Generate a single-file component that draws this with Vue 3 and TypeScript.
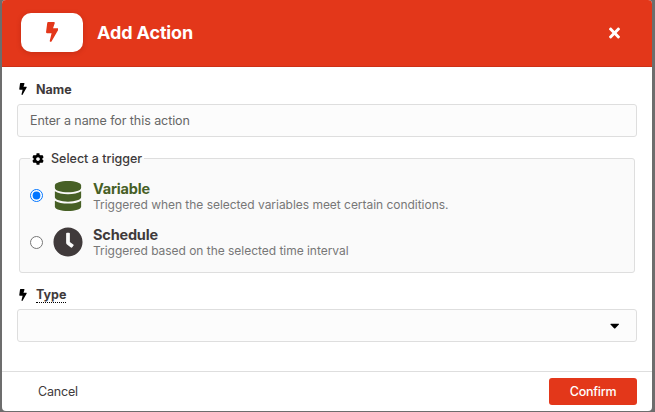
<script setup lang="ts">
import { ref } from 'vue'

interface Trigger {
  id: string
  title: string
  description: string
  viewBox: string
  path: string
}

const bolt =
  'M296 160H180.6l42.6-129.8C227.2 15 215.7 0 200 0H56C44 0 33.8 8.9 32.2 20.8l-32 240C-1.7 275.2 9.5 288 24 288h118.7L96.6 482.5c-3.6 15.2 8 29.5 23.3 29.5 8.4 0 16.4-4.4 20.8-12l176-304c9.3-15.9-2.2-36-20.7-36z'

const triggers: Trigger[] = [
  {
    id: 'variable',
    title: 'Variable',
    description: 'Triggered when the selected variables meet certain conditions.',
    viewBox: '0 0 448 512',
    path: 'M448 73.143v45.714C448 159.143 347.667 192 224 192S0 159.143 0 118.857V73.143C0 32.857 100.333 0 224 0s224 32.857 224 73.143zM448 176v102.857C448 319.143 347.667 352 224 352S0 319.143 0 278.857V176c48.125 33.143 136.208 48.572 224 48.572S399.874 209.143 448 176zm0 160v102.857C448 479.143 347.667 512 224 512S0 479.143 0 438.857V336c48.125 33.143 136.208 48.572 224 48.572S399.874 369.143 448 336z',
  },
  {
    id: 'schedule',
    title: 'Schedule',
    description: 'Triggered based on the selected time interval',
    viewBox: '0 0 512 512',
    path: 'M256,8C119,8,8,119,8,256S119,504,256,504,504,393,504,256,393,8,256,8Zm92.49,313h0l-20,25a16,16,0,0,1-22.49,2.5h0l-67-49.72a40,40,0,0,1-15-31.23V112a16,16,0,0,1,16-16h32a16,16,0,0,1,16,16V256l58,42.5A16,16,0,0,1,348.49,321Z',
  },
]

const name = ref('')
const selected = ref('variable')
</script>

<template>
  <div class="backdrop">
    <div class="modal">
      <header class="header">
        <div class="badge">
          <svg viewBox="0 0 320 512"><path :d="bolt" /></svg>
        </div>
        <h1 class="title">Add Action</h1>
        <button class="close" type="button" aria-label="Close">
          <svg viewBox="0 0 352 512"><path d="M242.72 256l100.07-100.07c12.28-12.28 12.28-32.19 0-44.48l-22.24-22.24c-12.28-12.28-32.19-12.28-44.48 0L176 189.28 75.93 89.21c-12.28-12.28-32.19-12.28-44.48 0L9.21 111.45c-12.28 12.28-12.28 32.19 0 44.48L109.28 256 9.21 356.07c-12.28 12.28-12.28 32.19 0 44.48l22.24 22.24c12.28 12.28 32.2 12.28 44.48 0L176 322.72l100.07 100.07c12.28 12.28 32.2 12.28 44.48 0l22.24-22.24c12.28-12.28 12.28-32.19 0-44.48L242.72 256z" /></svg>
        </button>
      </header>

      <main class="body">
        <label class="label" for="name">
          <svg class="label-icon" viewBox="0 0 320 512"><path :d="bolt" /></svg>
          <span>Name</span>
        </label>
        <input id="name" v-model="name" class="control" type="text" placeholder="Enter a name for this action" />

        <fieldset class="triggers">
          <legend class="legend">
            <svg viewBox="0 0 512 512"><path d="M487.4 315.7l-42.6-24.6c4.3-23.2 4.3-47 0-70.2l42.6-24.6c4.9-2.8 7.1-8.6 5.5-14-11.1-35.6-30-67.8-54.7-94.6-3.8-4.1-10-5.1-14.8-2.3L380.8 110c-17.9-15.4-38.5-27.3-60.8-35.1V25.8c0-5.6-3.9-10.5-9.4-11.7-36.7-8.2-74.3-7.8-109.2 0-5.5 1.2-9.4 6.1-9.4 11.7V75c-22.2 7.9-42.8 19.8-60.8 35.1L88.7 85.5c-4.9-2.8-11-1.9-14.8 2.3-24.7 26.7-43.6 58.9-54.7 94.6-1.7 5.4.6 11.2 5.5 14L67.3 221c-4.3 23.2-4.3 47 0 70.2l-42.6 24.6c-4.9 2.8-7.1 8.6-5.5 14 11.1 35.6 30 67.8 54.7 94.6 3.8 4.1 10 5.1 14.8 2.3l42.6-24.6c17.9 15.4 38.5 27.3 60.8 35.1v49.2c0 5.6 3.9 10.5 9.4 11.7 36.7 8.2 74.3 7.8 109.2 0 5.5-1.2 9.4-6.1 9.4-11.7v-49.2c22.2-7.9 42.8-19.8 60.8-35.1l42.6 24.6c4.9 2.8 11 1.9 14.8-2.3 24.7-26.7 43.6-58.9 54.7-94.6 1.5-5.5-.7-11.3-5.6-14.1zM256 336c-44.1 0-80-35.9-80-80s35.9-80 80-80 80 35.9 80 80-35.9 80-80 80z" /></svg>
            <span>Select a trigger</span>
          </legend>
          <label v-for="t in triggers" :key="t.id" class="option" :class="{ active: selected === t.id }">
            <input v-model="selected" class="radio" type="radio" name="trigger" :value="t.id" />
            <svg class="option-icon" :viewBox="t.viewBox"><path :d="t.path" /></svg>
            <span class="option-text">
              <strong>{{ t.title }}</strong>
              <small>{{ t.description }}</small>
            </span>
          </label>
        </fieldset>

        <div class="label type-label">
          <svg class="label-icon" viewBox="0 0 320 512"><path :d="bolt" /></svg>
          <span class="hint">Type</span>
        </div>
        <div class="control select" role="combobox" aria-label="Type" tabindex="0">
          <svg viewBox="0 0 320 512"><path d="M31.3 192h257.3c17.8 0 26.7 21.5 14.1 34.1L174.1 354.8c-7.8 7.8-20.5 7.8-28.3 0L17.2 226.1C4.6 213.5 13.5 192 31.3 192z" /></svg>
        </div>
      </main>

      <footer class="footer">
        <button class="cancel" type="button">Cancel</button>
        <button class="confirm" type="button">Confirm</button>
      </footer>
    </div>
  </div>
</template>

<style>
body {
  background: #6d6d6d;
  overflow: hidden;
}
</style>

<style scoped>
.backdrop,
.backdrop * {
  box-sizing: border-box;
}
.backdrop {
  height: 412px;
  padding: 0 3px 1px 2px;
  background: #6d6d6d;
  font-family: Inter, 'Liberation Sans', sans-serif;
  font-size: 12.5px;
  color: #403a3b;
}
svg {
  display: block;
  flex: none;
}
button {
  font: inherit;
  border: 0;
  padding: 0;
  background: none;
}
.modal {
  height: 411px;
  display: flex;
  flex-direction: column;
  background: #fff;
  border-radius: 4px;
  overflow: hidden;
}
.header {
  height: 67px;
  flex: none;
  display: flex;
  align-items: center;
  padding: 0 32px 1px 19px;
  background: #e3371a;
  border-bottom: 1px solid #cc3017;
}
.badge {
  width: 62px;
  height: 39px;
  display: flex;
  align-items: center;
  justify-content: center;
  background: #fff;
  border-radius: 10px;
  box-shadow: 0 1px 5px rgba(120, 20, 0, 0.28);
}
.badge svg {
  height: 20px;
  fill: #e3371a;
  margin-top: -1px;
}
.title {
  margin: 0 auto 0 14px;
  font-size: 18px;
  line-height: 22px;
  font-weight: 700;
  letter-spacing: -0.12px;
  color: #fff;
}
.close svg {
  height: 16px;
  fill: #fff;
}
.body {
  flex: 1;
  display: flex;
  flex-direction: column;
  padding: 15px 15px 0;
}
.label {
  height: 15px;
  display: flex;
  align-items: center;
  gap: 9px;
  padding-left: 2px;
  font-weight: 700;
}
.label-icon {
  width: 8px;
  height: 12px;
  margin-bottom: 1px;
}
.control {
  width: 620px;
  height: 33px;
  margin: 7px 0 0;
  padding: 0 12px;
  border: 1px solid #dedede;
  border-radius: 3px;
  background: #fcfcfc;
  font: inherit;
  letter-spacing: -0.07px;
  outline: none;
}
.control::placeholder {
  color: #666;
  opacity: 1;
}
.triggers {
  margin: 14px 2px 0;
  height: 122px;
  padding: 7px 10px 0;
  border: 1px solid #dedede;
  border-radius: 3px;
  background: #fafafa;
}
.legend {
  height: 15px;
  display: flex;
  align-items: center;
  gap: 7px;
  padding: 0 2px;
  font-weight: 500;
}
.legend svg {
  width: 12px;
}
.option {
  height: 46px;
  display: flex;
  align-items: center;
}
.radio {
  width: 13px;
  height: 13px;
  margin: 0 10px 0 0;
}
.active .radio {
  margin-bottom: 1px;
}
.option-icon {
  width: 30px;
  height: 30px;
  fill: #403a3b;
}
.option-text {
  margin-left: 10px;
  display: flex;
  flex-direction: column;
}
.option-text strong {
  font-size: 14.5px;
  line-height: 16px;
  letter-spacing: -0.2px;
}
.option-text small {
  font-size: 12px;
  line-height: 15px;
  letter-spacing: -0.03px;
  color: #777;
}
.active strong {
  color: #476026;
}
.active .option-icon {
  fill: #476026;
}
.type-label {
  margin-top: 15px;
}
.hint {
  line-height: 14px;
  border-bottom: 1px dotted #000;
}
.select {
  margin-top: 6px;
  display: flex;
  align-items: center;
  justify-content: flex-end;
  padding-right: 17px;
}
.select svg {
  height: 15px;
}
.footer {
  height: 40px;
  flex: none;
  display: flex;
  align-items: center;
  justify-content: space-between;
  padding: 0 15px 0 36px;
  border-top: 1px solid #dedede;
}
.cancel {
  color: #403a3b;
  letter-spacing: -0.2px;
}
.confirm {
  width: 88px;
  height: 27px;
  border-radius: 3px;
  background: #e3371a;
  color: #fff;
  font-weight: 500;
  letter-spacing: -0.25px;
}
</style>
